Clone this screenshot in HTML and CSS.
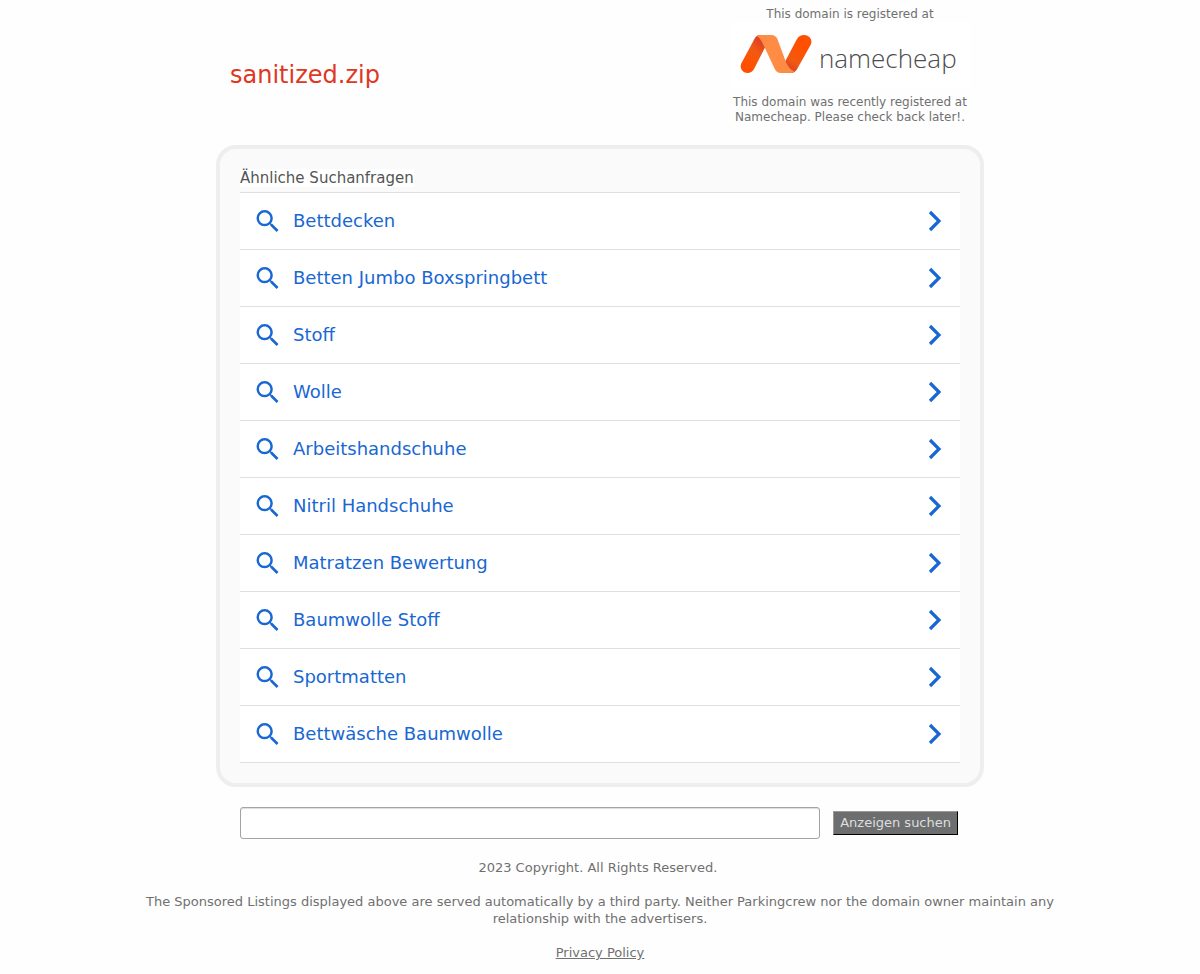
FILE: index.html
```html
<!DOCTYPE html>
<html lang="de">
<head>
<meta charset="utf-8">
<meta name="viewport" content="width=device-width, initial-scale=1">
<title>sanitized.zip</title>
<link rel="stylesheet" href="styles.css">
</head>
<body>
<svg class="sprite" aria-hidden="true">
  <symbol id="search" viewBox="3 3 17.5 17.5"><path d="M15.5 14h-.79l-.28-.27A6.471 6.471 0 0 0 16 9.5 6.5 6.5 0 1 0 9.5 16c1.61 0 3.09-.59 4.23-1.57l.27.28v.79l5 4.99L20.49 19l-4.99-5zm-6 0C7.01 14 5 11.99 5 9.5S7.01 5 9.5 5 14 7.01 14 9.5 11.99 14 9.5 14z"/></symbol>
  <symbol id="chevron" viewBox="0 0 14 22"><path d="M2 2 11 11 2 20" fill="none" stroke="currentColor" stroke-width="3.2"/></symbol>
</svg>
<header class="header">
  <h1 class="domain">sanitized.zip</h1>
  <div class="registrar">
    <p>This domain is registered at</p>
    <div class="logo">
      <svg class="logo-mark" viewBox="0 0 72 40" aria-hidden="true">
        <defs>
          <linearGradient id="left" x1="0" y1="1" x2=".7" y2="0"><stop offset=".3" stop-color="#ff5000"/><stop offset=".65" stop-color="#f15a13"/><stop offset="1" stop-color="#d93a2b"/></linearGradient>
          <linearGradient id="right" x1=".7" y1="0" x2=".2" y2="1"><stop offset=".3" stop-color="#ff5000"/><stop offset=".7" stop-color="#f15a13"/><stop offset="1" stop-color="#d93a2b"/></linearGradient>
        </defs>
        <path fill="url(#left)" d="M1.4 29.2 14.800 4.200Q16.800 1 20.500 1L27 9 25 13.500 14 35Q11.800 39 7.500 39C2.300 39-.7 34 1.400 29.200Z"/>
        <path fill="url(#right)" d="M45.300 27 57 5Q59.400 1 64 1C69.500 1 73 6 70.700 10.800L57 35.300Q54.900 39 51 39L44 33Z"/>
        <path fill="#ff8c44" d="M19 1H31.500Q35.300 1 37.200 4.600L46.500 29.500Q50 36 54.200 37 53 39 51 39H40.500Q36.700 39 34.900 35.300L23.500 11Q20.500 4.500 17.200 2.300 18 1 19 1Z"/>
      </svg>
      <span class="logo-name">namecheap</span>
    </div>
    <p>This domain was recently registered at Namecheap. Please check back later!.</p>
  </div>
</header>
<main class="card">
  <h2 class="heading"><span>Ähnliche Suchanfragen</span></h2>
  <ul class="list">
    <li><a href="#"><svg class="search-icon" aria-hidden="true"><use href="#search"/></svg><span>Bettdecken</span><svg class="chevron" aria-hidden="true"><use href="#chevron"/></svg></a></li>
    <li><a href="#"><svg class="search-icon" aria-hidden="true"><use href="#search"/></svg><span>Betten Jumbo Boxspringbett</span><svg class="chevron" aria-hidden="true"><use href="#chevron"/></svg></a></li>
    <li><a href="#"><svg class="search-icon" aria-hidden="true"><use href="#search"/></svg><span>Stoff</span><svg class="chevron" aria-hidden="true"><use href="#chevron"/></svg></a></li>
    <li><a href="#"><svg class="search-icon" aria-hidden="true"><use href="#search"/></svg><span>Wolle</span><svg class="chevron" aria-hidden="true"><use href="#chevron"/></svg></a></li>
    <li><a href="#"><svg class="search-icon" aria-hidden="true"><use href="#search"/></svg><span>Arbeitshandschuhe</span><svg class="chevron" aria-hidden="true"><use href="#chevron"/></svg></a></li>
    <li><a href="#"><svg class="search-icon" aria-hidden="true"><use href="#search"/></svg><span>Nitril Handschuhe</span><svg class="chevron" aria-hidden="true"><use href="#chevron"/></svg></a></li>
    <li><a href="#"><svg class="search-icon" aria-hidden="true"><use href="#search"/></svg><span>Matratzen Bewertung</span><svg class="chevron" aria-hidden="true"><use href="#chevron"/></svg></a></li>
    <li><a href="#"><svg class="search-icon" aria-hidden="true"><use href="#search"/></svg><span>Baumwolle Stoff</span><svg class="chevron" aria-hidden="true"><use href="#chevron"/></svg></a></li>
    <li><a href="#"><svg class="search-icon" aria-hidden="true"><use href="#search"/></svg><span>Sportmatten</span><svg class="chevron" aria-hidden="true"><use href="#chevron"/></svg></a></li>
    <li><a href="#"><svg class="search-icon" aria-hidden="true"><use href="#search"/></svg><span>Bettwäsche Baumwolle</span><svg class="chevron" aria-hidden="true"><use href="#chevron"/></svg></a></li>
  </ul>
</main>
<form class="search-form">
  <input class="search-box" type="text" name="q" aria-label="Anzeigen suchen">
  <button class="search-button" type="submit">Anzeigen suchen</button>
</form>
<footer class="footer">
  <p>2023 Copyright. All Rights Reserved.&nbsp;</p>
  <p>The Sponsored Listings displayed above are served automatically by a third party. Neither Parkingcrew nor the domain owner maintain any relationship with the advertisers.</p>
  <p><a href="#">Privacy Policy</a></p>
</footer>
</body>
</html>
```
FILE: styles.css
```css
* { box-sizing: border-box; }

body {
  margin: 0;
  background: #fefefe;
  color: #707070;
  font-family: "DejaVu Sans", sans-serif;
  font-size: 13px;
  line-height: 17px;
}

h1, h2, p, ul { margin: 0; padding: 0; font-weight: normal; }

.sprite { display: none; }

.header {
  display: flex;
  justify-content: space-between;
  align-items: flex-start;
  max-width: 740px;
  margin: 0 auto;
  padding-top: 7px;
}

.domain {
  padding-top: 54px;
  color: #de3723;
  font-size: 24px;
  line-height: 28px;
}

.registrar {
  width: 240px;
  font-size: 12px;
  line-height: 15px;
  text-align: center;
}

.logo {
  display: flex;
  align-items: center;
  gap: 7px;
  height: 66px;
  margin-bottom: 7px;
  padding: 0 0 3px 10px;
  background: #fff;
}

.logo-mark { flex: none; width: 72px; height: 40px; }

.logo-name {
  padding-top: 9px;
  color: #4c4d4f;
  font-family: "Open Sans", sans-serif;
  font-size: 26px;
  font-weight: 300;
  line-height: 32px;
}

.card {
  max-width: 768px;
  margin: 20px auto 20px;
  padding: 20px;
  border: 4px solid #eee;
  border-radius: 20px;
  background: #fafafa;
}

.heading {
  padding-bottom: 4px;
  color: #555;
  font-size: 15px;
  line-height: 19px;
}

.heading span { background: #fff; }

.list { border-top: 1px solid #dedfe1; list-style: none; }

.list li { border-bottom: 1px solid #dedfe1; background: #fff; }

.list a {
  display: flex;
  align-items: center;
  height: 56px;
  padding: 0 18px 0 16px;
  color: #1967d2;
  font-size: 18px;
  line-height: 22px;
  text-decoration: none;
}

.search-icon { width: 23px; height: 22px; margin-right: 14px; fill: currentColor; }

.chevron { width: 14px; height: 22px; margin-left: auto; }

.search-form {
  display: flex;
  align-items: center;
  gap: 13px;
  max-width: 720px;
  margin: 0 auto;
  padding-right: 2px;
}

.search-box {
  flex: 1;
  min-width: 0;
  height: 32px;
  padding: 4px 8px;
  border: 1px solid #a4a4a4;
  border-radius: 3px;
  background: #fff;
  box-shadow: inset 0 1px 1px #ddd;
  font: inherit;
}

.search-button {
  height: 24px;
  padding: 0 6px 2px;
  border: 1px solid;
  border-color: #999 #000 #000 #999;
  background: #6d6e70;
  color: #dedede;
  font: inherit;
}

.footer {
  display: flex;
  flex-direction: column;
  gap: 17px;
  max-width: 960px;
  margin: 20px auto 0;
  padding-bottom: 12px;
  text-align: center;
}

.footer a { color: inherit; }
```
